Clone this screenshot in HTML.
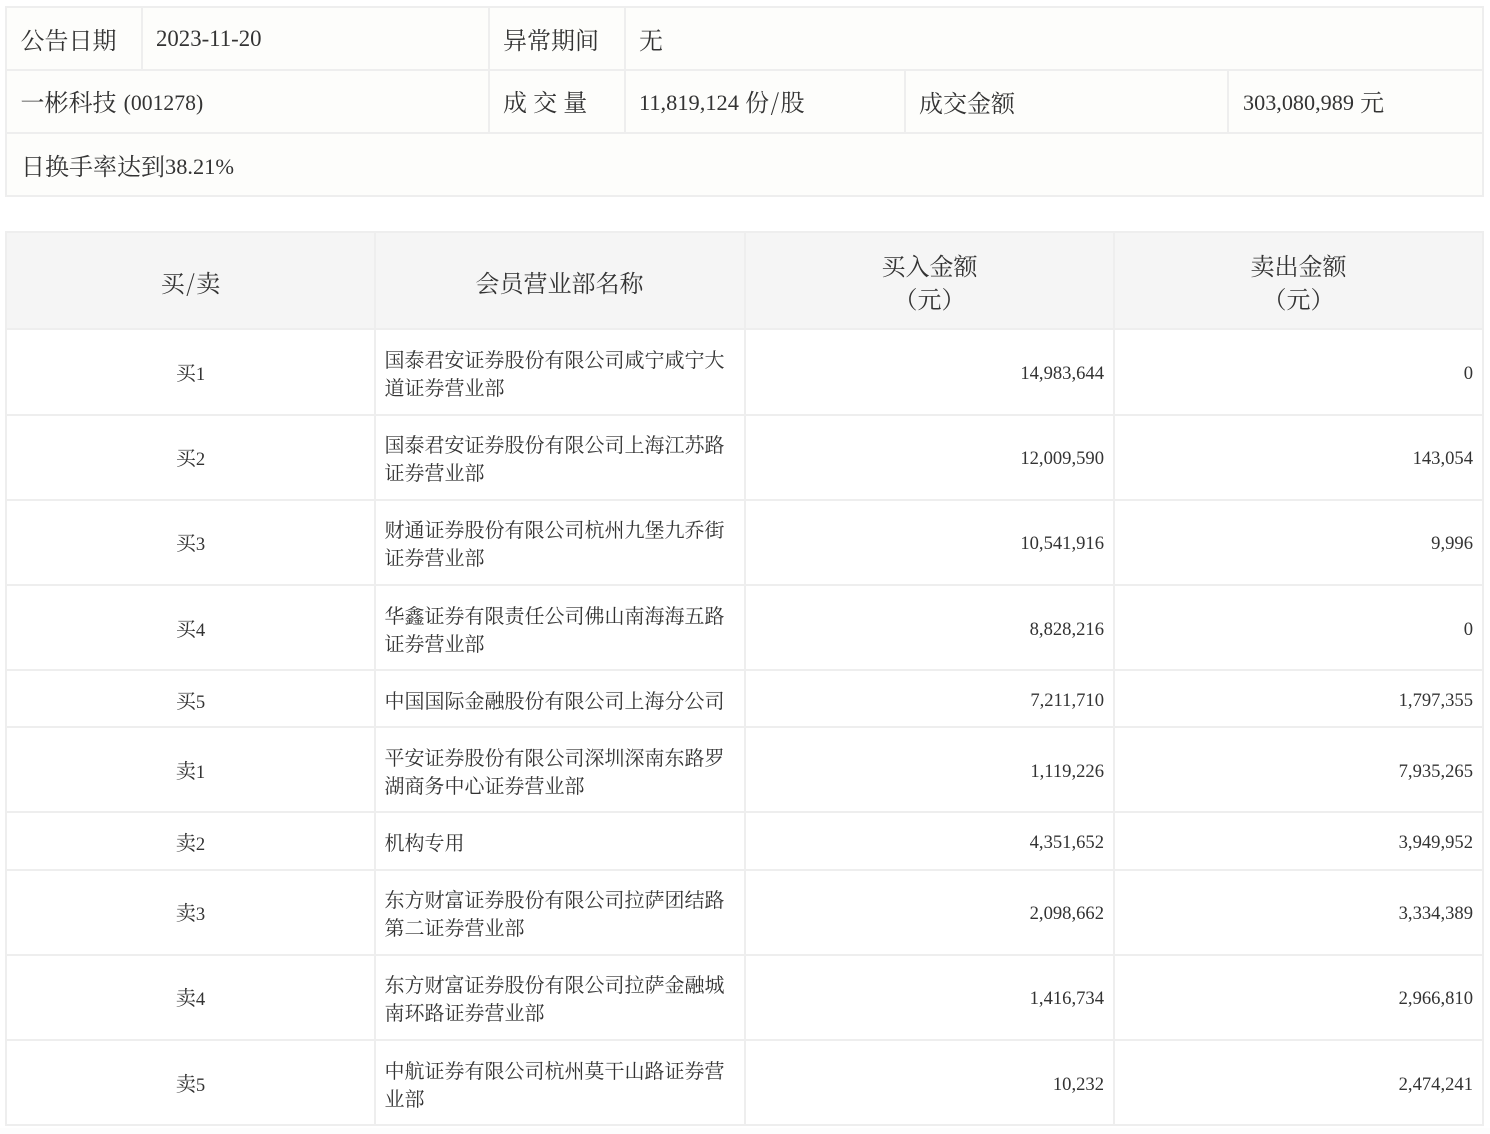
<!DOCTYPE html>
<html><head><meta charset="utf-8">
<style>
html,body{margin:0;padding:0;background:#fff}
#p{position:relative;width:1490px;height:1134px;overflow:hidden;background:#fff;font-family:"Noto Serif CJK SC","Liberation Serif",serif;color:#333}
#p div{position:absolute}
.l{background:#eee}
.t{white-space:nowrap;font-size:24px;line-height:34px;height:34px}
.s{white-space:nowrap;font-size:20px;line-height:28px}
.c{text-align:center}
.r{text-align:right}
.n{font-family:"Liberation Serif",serif;font-size:18.6px}
.m{font-family:"Liberation Serif",serif;font-size:22.4px;position:relative;top:-1px}
.a{margin:0 1.5px}
</style></head><body><div id="p">
<div style="left:0;top:1128px;width:1490px;height:6px;background:#fdfdfd"></div>
<div style="left:5px;top:6px;width:1479px;height:191px;background:#fdfdfb"></div>
<div style="left:5px;top:231px;width:1479px;height:99px;background:#f5f5f5"></div>

<div class="l" style="left:5px;top:6px;width:1479px;height:2px"></div>
<div class="l" style="left:5px;top:69px;width:1479px;height:2px"></div>
<div class="l" style="left:5px;top:132px;width:1479px;height:2px"></div>
<div class="l" style="left:5px;top:195px;width:1479px;height:2px"></div>
<div class="l" style="left:5px;top:6px;width:2px;height:191px"></div>
<div class="l" style="left:1482px;top:6px;width:2px;height:191px"></div>
<div class="l" style="left:141px;top:6px;width:2px;height:65px"></div>
<div class="l" style="left:488px;top:6px;width:2px;height:128px"></div>
<div class="l" style="left:624px;top:6px;width:2px;height:128px"></div>
<div class="l" style="left:904px;top:69px;width:2px;height:65px"></div>
<div class="l" style="left:1227px;top:69px;width:2px;height:65px"></div>

<div class="t" style="left:20.5px;top:22px">公告日期</div>
<div class="t" style="left:156px;top:20px"><span class="m" style="font-size:22.8px">2023-11-20</span></div>
<div class="t" style="left:503px;top:22px">异常期间</div>
<div class="t" style="left:639px;top:22px">无</div>
<div class="t" style="left:20.5px;top:84px">一彬科技 <span class="m" style="font-size:21.7px;margin-left:1px">(001278)</span></div>
<div class="t" style="left:503px;top:84px">成 交 量</div>
<div class="t" style="left:639px;top:84px"><span class="m">11,819,124</span> 份<span class="a">/</span>股</div>
<div class="t" style="left:919px;top:85px">成交金额</div>
<div class="t" style="left:1243px;top:84px"><span class="m" style="font-size:22.2px">303,080,989</span> 元</div>
<div class="t" style="left:21px;top:148px">日换手率达到<span class="m">38.21%</span></div>

<div class="l" style="left:5px;top:231px;width:1479px;height:2px"></div>
<div class="l" style="left:5px;top:328px;width:1479px;height:2px"></div>
<div class="l" style="left:5px;top:414px;width:1479px;height:2px"></div>
<div class="l" style="left:5px;top:499px;width:1479px;height:2px"></div>
<div class="l" style="left:5px;top:584px;width:1479px;height:2px"></div>
<div class="l" style="left:5px;top:669px;width:1479px;height:2px"></div>
<div class="l" style="left:5px;top:726px;width:1479px;height:2px"></div>
<div class="l" style="left:5px;top:811px;width:1479px;height:2px"></div>
<div class="l" style="left:5px;top:869px;width:1479px;height:2px"></div>
<div class="l" style="left:5px;top:954px;width:1479px;height:2px"></div>
<div class="l" style="left:5px;top:1039px;width:1479px;height:2px"></div>
<div class="l" style="left:5px;top:1124px;width:1479px;height:2px"></div>
<div class="l" style="left:5px;top:231px;width:2px;height:895px"></div>
<div class="l" style="left:374px;top:231px;width:2px;height:895px"></div>
<div class="l" style="left:744px;top:231px;width:2px;height:895px"></div>
<div class="l" style="left:1113px;top:231px;width:2px;height:895px"></div>
<div class="l" style="left:1482px;top:231px;width:2px;height:895px"></div>

<div class="t c" style="left:6px;width:369px;top:265px">买<span class="a">/</span>卖</div>
<div class="t c" style="left:374.5px;width:370px;top:265px">会员营业部名称</div>
<div class="t c" style="left:745px;width:369px;top:248px">买入金额</div>
<div class="t c" style="left:745px;width:369px;top:281px">（元）</div>
<div class="t c" style="left:1114px;width:369px;top:248px">卖出金额</div>
<div class="t c" style="left:1114px;width:369px;top:281px">（元）</div>

<div class="s c" style="left:6px;width:369px;top:358px">买<span class="n">1</span></div>
<div class="s" style="left:384.5px;top:345px">国泰君安证券股份有限公司咸宁咸宁大<br>道证券营业部</div>
<div class="s r" style="right:386px;top:357px"><span class="n">14,983,644</span></div>
<div class="s r" style="right:17px;top:357px"><span class="n">0</span></div>

<div class="s c" style="left:6px;width:369px;top:443px">买<span class="n">2</span></div>
<div class="s" style="left:384.5px;top:430px">国泰君安证券股份有限公司上海江苏路<br>证券营业部</div>
<div class="s r" style="right:386px;top:442px"><span class="n">12,009,590</span></div>
<div class="s r" style="right:17px;top:442px"><span class="n">143,054</span></div>

<div class="s c" style="left:6px;width:369px;top:528px">买<span class="n">3</span></div>
<div class="s" style="left:384.5px;top:515px">财通证券股份有限公司杭州九堡九乔街<br>证券营业部</div>
<div class="s r" style="right:386px;top:527px"><span class="n">10,541,916</span></div>
<div class="s r" style="right:17px;top:527px"><span class="n">9,996</span></div>

<div class="s c" style="left:6px;width:369px;top:614px">买<span class="n">4</span></div>
<div class="s" style="left:384.5px;top:601px">华鑫证券有限责任公司佛山南海海五路<br>证券营业部</div>
<div class="s r" style="right:386px;top:613px"><span class="n">8,828,216</span></div>
<div class="s r" style="right:17px;top:613px"><span class="n">0</span></div>

<div class="s c" style="left:6px;width:369px;top:686px">买<span class="n">5</span></div>
<div class="s" style="left:384.5px;top:686px">中国国际金融股份有限公司上海分公司</div>
<div class="s r" style="right:386px;top:684px"><span class="n">7,211,710</span></div>
<div class="s r" style="right:17px;top:684px"><span class="n">1,797,355</span></div>

<div class="s c" style="left:6px;width:369px;top:756px">卖<span class="n">1</span></div>
<div class="s" style="left:384.5px;top:743px">平安证券股份有限公司深圳深南东路罗<br>湖商务中心证券营业部</div>
<div class="s r" style="right:386px;top:755px"><span class="n">1,119,226</span></div>
<div class="s r" style="right:17px;top:755px"><span class="n">7,935,265</span></div>

<div class="s c" style="left:6px;width:369px;top:828px">卖<span class="n">2</span></div>
<div class="s" style="left:384.5px;top:828px">机构专用</div>
<div class="s r" style="right:386px;top:826px"><span class="n">4,351,652</span></div>
<div class="s r" style="right:17px;top:826px"><span class="n">3,949,952</span></div>

<div class="s c" style="left:6px;width:369px;top:898px">卖<span class="n">3</span></div>
<div class="s" style="left:384.5px;top:885px">东方财富证券股份有限公司拉萨团结路<br>第二证券营业部</div>
<div class="s r" style="right:386px;top:897px"><span class="n">2,098,662</span></div>
<div class="s r" style="right:17px;top:897px"><span class="n">3,334,389</span></div>

<div class="s c" style="left:6px;width:369px;top:983px">卖<span class="n">4</span></div>
<div class="s" style="left:384.5px;top:970px">东方财富证券股份有限公司拉萨金融城<br>南环路证券营业部</div>
<div class="s r" style="right:386px;top:982px"><span class="n">1,416,734</span></div>
<div class="s r" style="right:17px;top:982px"><span class="n">2,966,810</span></div>

<div class="s c" style="left:6px;width:369px;top:1069px">卖<span class="n">5</span></div>
<div class="s" style="left:384.5px;top:1056px">中航证券有限公司杭州莫干山路证券营<br>业部</div>
<div class="s r" style="right:386px;top:1068px"><span class="n">10,232</span></div>
<div class="s r" style="right:17px;top:1068px"><span class="n">2,474,241</span></div>
</div></body></html>
